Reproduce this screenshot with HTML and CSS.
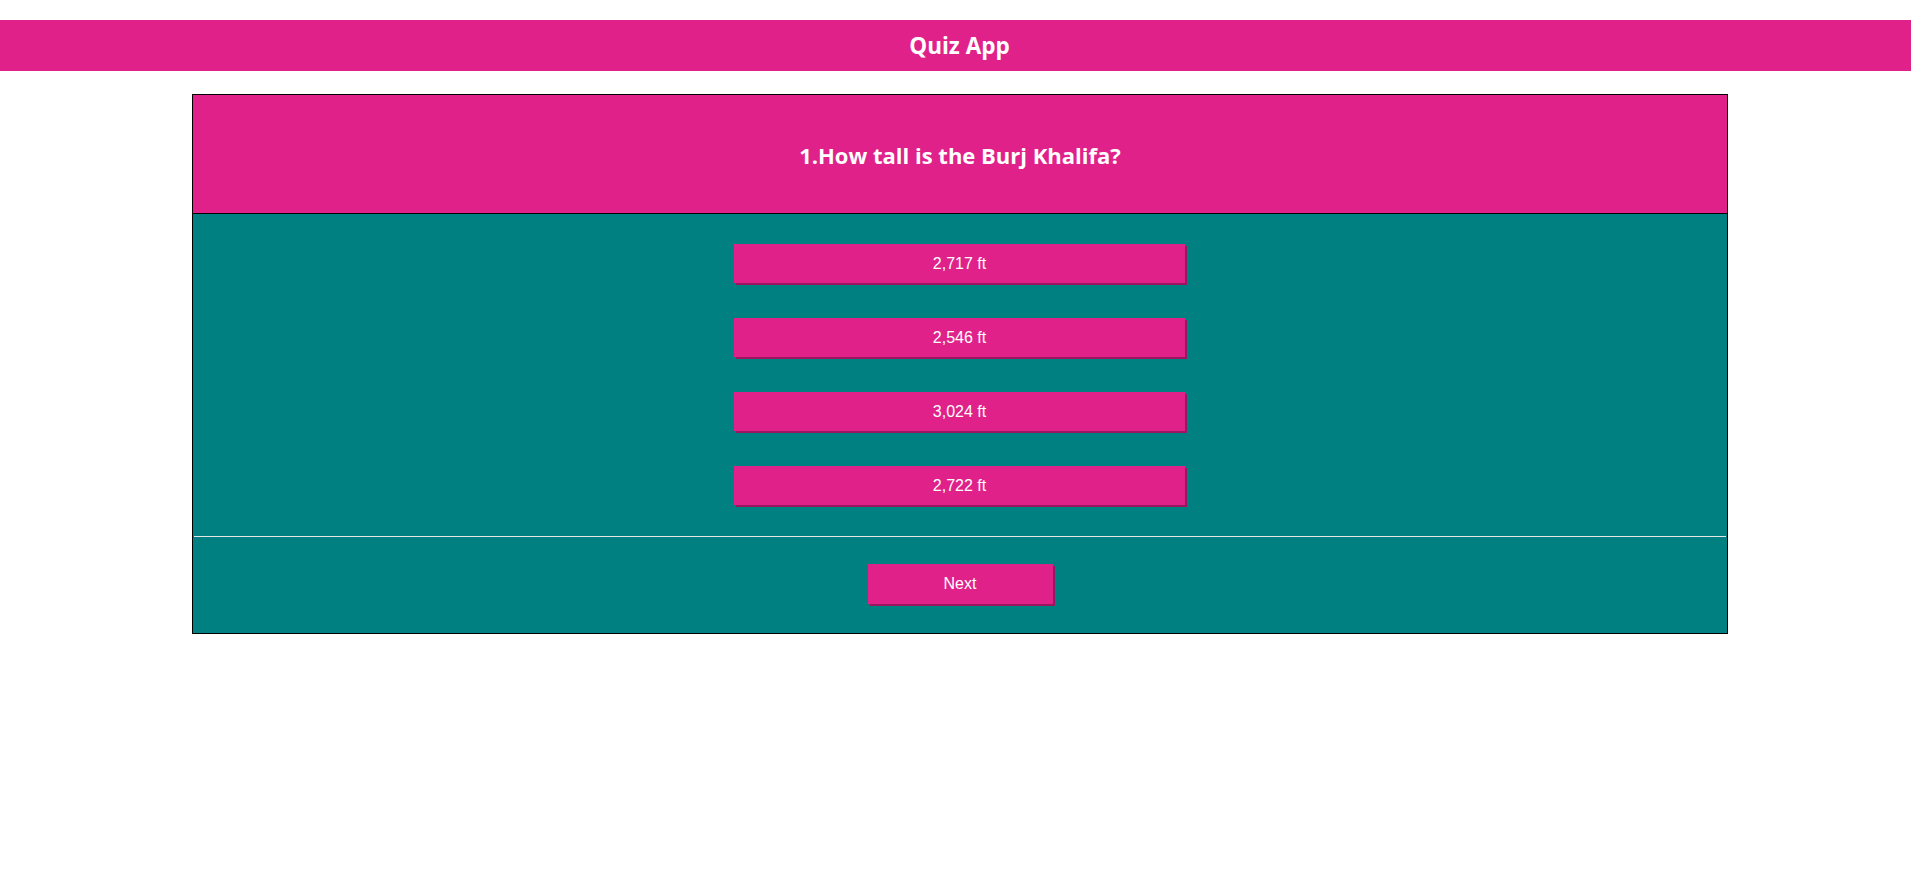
FILE: index.html
```html
<!DOCTYPE html>
<html lang="en">
<head>
<meta charset="utf-8">
<title>Quiz App</title>
<link rel="stylesheet" href="styles.css">
</head>
<body>
<header class="topbar">Quiz App</header>
<main class="quiz">
  <div class="question">1.How tall is the Burj Khalifa?</div>
  <div class="answers">
    <button class="btn answer">2,717 ft</button>
    <button class="btn answer">2,546 ft</button>
    <button class="btn answer">3,024 ft</button>
    <button class="btn answer">2,722 ft</button>
  </div>
  <div class="divider"></div>
  <div class="footer">
    <button class="btn next">Next</button>
  </div>
</main>
</body>
</html>
```

FILE: styles.css
```css
html, body {
  margin: 0;
  padding: 0;
  background: #ffffff;
}

body {
  font-family: "Open Sans", "Noto Sans", sans-serif;
}

.topbar {
  margin-top: 20px;
  height: 51px;
  background: #e0218a;
  color: #ffffff;
  font-weight: 700;
  font-size: 22.5px;
  display: flex;
  align-items: center;
  justify-content: center;
  padding-left: 8px;
}

.quiz {
  margin: 23px 0 0 192px;
  width: 1534px;
  border: 1px solid #000000;
  background: #008080;
}

.question {
  height: 119px;
  background: #e0218a;
  border-bottom: 1px solid #000000;
  color: #ffffff;
  font-weight: 700;
  font-size: 22px;
  display: flex;
  align-items: center;
  justify-content: center;
  padding-top: 2px;
  box-sizing: border-box;
}

.answers {
  display: flex;
  flex-direction: column;
  align-items: center;
  gap: 35px;
  padding: 30px 0 31px;
}

.btn {
  font-family: "Liberation Sans", Arial, sans-serif;
  font-size: 16px;
  color: #ffffff;
  background: #e0218a;
  border: none;
  margin: 0;
  padding: 0;
  height: 39px;
  box-shadow: 2px 2px 0 #9b1660;
  cursor: pointer;
}

.answer {
  width: 451px;
  margin-right: 1px;
}

.divider {
  height: 1px;
  background: #e6e6e6;
  margin: 0 1px;
}

.footer {
  display: flex;
  justify-content: center;
  padding: 27px 0 29px;
}

.next {
  width: 185px;
  height: 40px;
}
```
